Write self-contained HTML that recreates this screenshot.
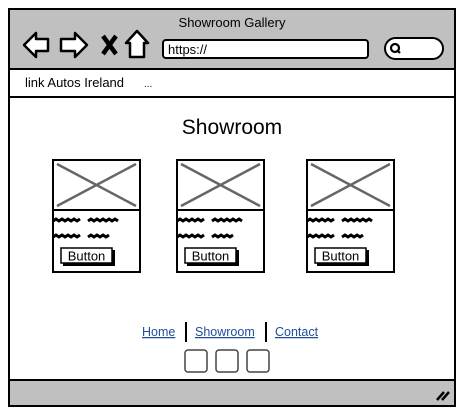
<!DOCTYPE html>
<html><head><meta charset="utf-8"><style>
html,body{margin:0;padding:0;background:#fff;width:464px;height:419px;overflow:hidden}
svg{display:block}
text{font-family:"Liberation Sans",sans-serif}
</style></head><body>
<svg width="464" height="419" viewBox="0 0 464 419" xmlns="http://www.w3.org/2000/svg">
<rect x="9" y="9" width="446" height="397" fill="#fff" stroke="#000" stroke-width="2"/>
<rect x="10" y="10" width="444" height="58" fill="#c0c0c0"/>
<text x="232" y="27" text-anchor="middle" font-size="13">Showroom Gallery</text>
<path d="M24 45 L36 33 L36 39 L48 39 L48 51 L36 51 L36 57 Z" fill="#fff" stroke="#000" stroke-width="2.5" stroke-linejoin="round"/>
<path d="M87 45 L75 33 L75 39 L61 39 L61 51 L75 51 L75 57 Z" fill="#fff" stroke="#000" stroke-width="2.5" stroke-linejoin="round"/>
<path d="M103 36 L116 54 M116 36 L103 54" stroke="#000" stroke-width="4.5"/>
<path d="M137 31 L148 43 L144 43 L144 57 L130 57 L130 43 L126 43 Z" fill="#fff" stroke="#000" stroke-width="2.5" stroke-linejoin="round"/>
<rect x="163" y="40" width="205" height="18" rx="3" fill="#fff" stroke="#000" stroke-width="2"/>
<text x="168" y="54" font-size="13">https://</text>
<rect x="385" y="38" width="58" height="21" rx="10.5" fill="#fff" stroke="#000" stroke-width="2"/>
<circle cx="395" cy="48" r="4" fill="none" stroke="#000" stroke-width="2.2"/>
<path d="M397 50 L400 53" stroke="#000" stroke-width="2.2"/>
<rect x="9" y="69" width="446" height="28" fill="#fff" stroke="#000" stroke-width="2"/>
<text x="25" y="87" font-size="13">link Autos Ireland</text>
<text x="144" y="87" font-size="10">...</text>
<text x="232" y="134" text-anchor="middle" font-size="21">Showroom</text>
<g id="card">
<rect x="53" y="160" width="87" height="112" fill="#fff" stroke="#000" stroke-width="2"/>
<line x1="53" y1="210" x2="140" y2="210" stroke="#000" stroke-width="2"/>
<path d="M57 164 L136 206 M136 164 L57 206" stroke="#666" stroke-width="2.5"/>
<path d="M53 221 l3 -2 l3 2 l3 -2 l3 2 l3 -2 l3 2 l3 -2 l3 2 l3 -2 M88 221 l3 -2 l3 2 l3 -2 l3 2 l3 -2 l3 2 l3 -2 l3 2 l3 -2 l3 2" stroke="#000" stroke-width="3" fill="none"/>
<path d="M53 237 l3 -2 l3 2 l3 -2 l3 2 l3 -2 l3 2 l3 -2 l3 2 l3 -2 M88 237 l3 -2 l3 2 l3 -2 l3 2 l3 -2 l3 2 l3 -2" stroke="#000" stroke-width="3" fill="none"/>
<rect x="63" y="250" width="52" height="16" fill="#000"/>
<rect x="61" y="248" width="51" height="15" fill="#fff" stroke="#000" stroke-width="1.5"/>
<text x="86.5" y="260.5" text-anchor="middle" font-size="13">Button</text>
</g>
<use href="#card" x="124"/>
<use href="#card" x="254"/>
<text x="142" y="336" font-size="12.5" fill="#1f4e9a" text-decoration="underline">Home</text>
<line x1="186" y1="322" x2="186" y2="342" stroke="#000" stroke-width="2"/>
<text x="195" y="336" font-size="12.5" fill="#1f4e9a" text-decoration="underline">Showroom</text>
<line x1="266" y1="322" x2="266" y2="342" stroke="#000" stroke-width="2"/>
<text x="275" y="336" font-size="12.5" fill="#1f4e9a" text-decoration="underline">Contact</text>
<rect x="185" y="350" width="22" height="22" rx="3" fill="#fff" stroke="#444" stroke-width="1.5"/>
<rect x="216" y="350" width="22" height="22" rx="3" fill="#fff" stroke="#444" stroke-width="1.5"/>
<rect x="247" y="350" width="22" height="22" rx="3" fill="#fff" stroke="#444" stroke-width="1.5"/>
<rect x="9" y="380" width="446" height="26" fill="#c0c0c0" stroke="#000" stroke-width="2"/>
<path d="M437 400 L444 392 M442 400 L449 392" stroke="#000" stroke-width="2.5"/>
</svg>
</body></html>
